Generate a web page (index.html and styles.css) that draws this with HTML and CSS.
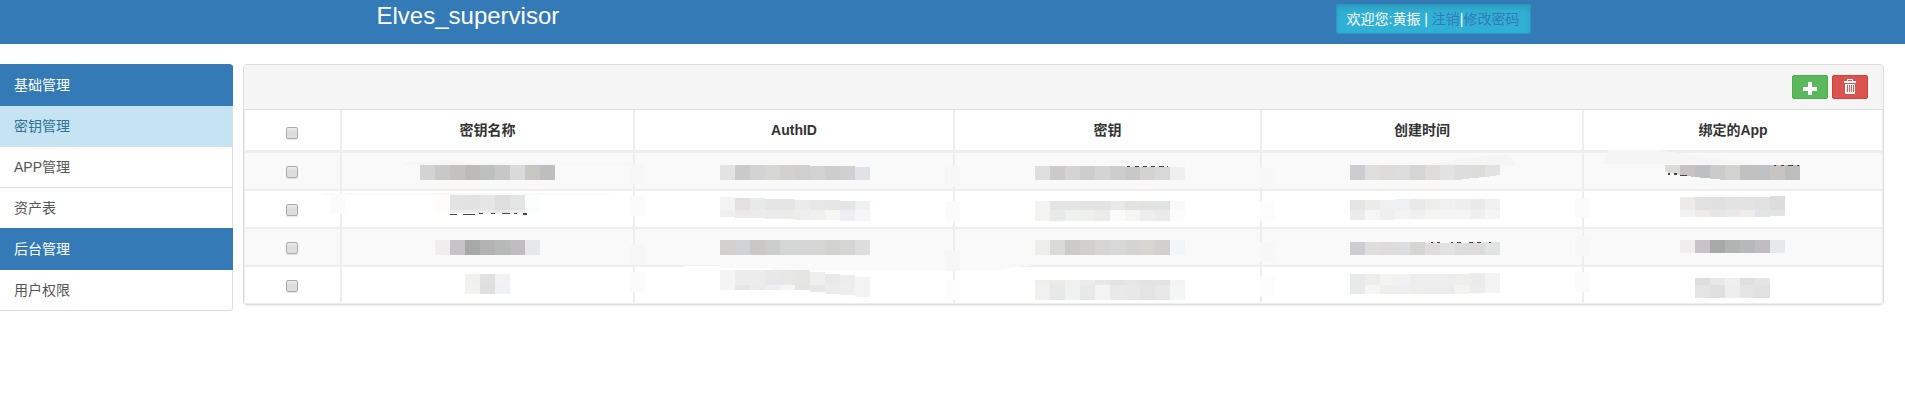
FILE: index.html
```html
<!DOCTYPE html>
<html lang="zh-CN">
<head>
<meta charset="utf-8">
<title>Elves_supervisor</title>
<link rel="stylesheet" href="styles.css">
</head>
<body>
<header class="topbar">
  <div class="topbar-inner">
    <h1 class="brand">Elves_supervisor</h1>
    <div class="welcome">欢迎您:黄振 | <a href="#logout">注销</a>|<a href="#password">修改密码</a></div>
  </div>
</header>
<div class="layout">
  <nav class="menu">
    <div class="menu-title">基础管理</div>
    <a class="menu-item current" href="#keys">密钥管理</a>
    <a class="menu-item" href="#apps">APP管理</a>
    <a class="menu-item" href="#assets">资产表</a>
    <div class="menu-title">后台管理</div>
    <a class="menu-item" href="#users">用户权限</a>
  </nav>
  <main class="panel">
    <div class="panel-heading">
      <button class="btn btn-add" type="button" aria-label="添加"><svg width="14" height="14" viewBox="0 0 14 14"><path fill="#fff" d="M5 0h4v5h5v4H9v4H5V9H0V5h5z"/></svg></button>
      <button class="btn btn-delete" type="button" aria-label="删除"><svg width="14" height="16" viewBox="0 0 14 16"><path fill="#fff" fill-rule="evenodd" d="M4 2V1q0-1 1-1h4q1 0 1 1v1h3v2H1V2zM5 2h4V1H5zM2 5h10v9q0 1-1 1H3q-1 0-1-1zM4 6v7h1V6zM6 6v7h1V6zM8 6v7h1V6zM10 6v7h1V6z"/></svg></button>
    </div>
    <table class="keys">
      <colgroup><col class="c-check"><col class="c-name"><col class="c-auth"><col class="c-key"><col class="c-time"><col class="c-app"></colgroup>
      <thead>
        <tr><th><input type="checkbox" aria-label="全选"></th><th>密钥名称</th><th>AuthID</th><th>密钥</th><th>创建时间</th><th>绑定的App</th></tr>
      </thead>
      <tbody>
        <tr><td><input type="checkbox" aria-label="选择第1行"></td><td class="masked"></td><td class="masked"></td><td class="masked"></td><td class="masked"></td><td class="masked"></td></tr>
        <tr><td><input type="checkbox" aria-label="选择第2行"></td><td class="masked"></td><td class="masked"></td><td class="masked"></td><td class="masked"></td><td class="masked"></td></tr>
        <tr><td><input type="checkbox" aria-label="选择第3行"></td><td class="masked"></td><td class="masked"></td><td class="masked"></td><td class="masked"></td><td class="masked"></td></tr>
        <tr><td><input type="checkbox" aria-label="选择第4行"></td><td class="masked"></td><td class="masked"></td><td class="masked"></td><td class="masked"></td><td class="masked"></td></tr>
      </tbody>
    </table>
  </main>
</div>
<script src="mask.js"></script>
</body>
</html>
```

FILE: styles.css
```css
* { box-sizing: border-box; }

body {
  margin: 0;
  background: #fff;
  color: #333;
  font: 14px/20px "Liberation Sans", "Noto Sans CJK SC", sans-serif;
}

a { color: #337ab7; text-decoration: none; }

.topbar { background: #337ab7; }

.topbar-inner {
  display: flex;
  justify-content: space-between;
  align-items: flex-start;
  max-width: 1156px;
  margin: 0 auto;
  padding: 4px 0 10px;
}

.brand {
  margin: 0;
  padding-left: 2px;
  color: #fff;
  font-size: 24px;
  font-weight: 400;
  line-height: 24px;
}

.welcome {
  padding: 4px 10px;
  border: 1px solid #269abc;
  border-radius: 2px;
  background: #31b0d5;
  box-shadow: inset 0 3px 5px rgba(0, 0, 0, .125);
  color: #fff;
}

.layout {
  display: flex;
  align-items: flex-start;
  gap: 10px;
  padding: 20px 21px 0 0;
}

.menu {
  flex: 0 0 233px;
  border-radius: 0 4px 4px 0;
  overflow: hidden;
  border-bottom: 1px solid #ddd;
}

.menu-title,
.menu-item {
  display: block;
  padding: 10px 14px;
  border-right: 1px solid #ddd;
  color: #555;
}

.menu-title {
  padding: 11px 14px;
  border-color: #337ab7;
  background: #337ab7;
  color: #fff;
}

.menu-item + .menu-item { border-top: 1px solid #ddd; }

.menu-item.current { background: #c4e3f3; color: #31708f; }

.panel {
  flex: 1;
  min-width: 0;
  border: 1px solid #ddd;
  border-radius: 4px;
  box-shadow: 0 1px 1px rgba(0, 0, 0, .05);
}

.panel-heading {
  display: flex;
  justify-content: flex-end;
  gap: 4px;
  padding: 10px 15px;
  border-bottom: 1px solid #ddd;
  border-radius: 3px 3px 0 0;
  background: #f5f5f5;
}

.btn {
  display: flex;
  align-items: center;
  justify-content: center;
  width: 36px;
  height: 24px;
  padding: 0;
  border: 1px solid #4cae4c;
  border-radius: 2px;
  background: #5cb85c;
}

.btn-add { padding-top: 3px; }
.btn-delete { border-color: #d43f3a; background: #d9534f; }

.keys {
  width: 100%;
  table-layout: fixed;
  border-collapse: separate;
  border-spacing: 0;
}

.c-check { width: 5.92%; }
.c-name { width: 17.88%; }
.c-auth { width: 19.52%; }
.c-key { width: 18.73%; }
.c-time { width: 19.65%; }
.c-app { width: 18.3%; }

.keys th,
.keys td {
  padding: 0;
  border: 1px solid #eee;
  text-align: center;
}

.keys th {
  height: 42px;
  border-top: 0;
  border-bottom-width: 2px;
  font-weight: 700;
}

.keys td { height: 38px; }
.keys th:first-child,
.keys td:first-child { padding-right: 2px; }
.keys tbody tr:nth-child(odd) { background: #f9f9f9; }

.keys input {
  display: block;
  appearance: none;
  width: 12px;
  height: 12px;
  margin: 2px auto 0;
  border: 1px solid #aaa;
  border-radius: 2px;
  background: linear-gradient(#ededed, #dcdcdc 40%, #dedede);
  box-shadow: 0 1px 1px rgba(0, 0, 0, .1);
}

.keys th input { margin-top: 5px; }

.masked svg {
  display: block;
  width: 210px;
  height: 36px;
  margin: 0 auto;
  overflow: visible;
}
```

FILE: mask.js
```js
// Mosaic drawings that hide the key data. One drawing per cell, in table order.
// tiles: [x, top, split, bottom, upper colours, lower colours, skew tops]
// extra: [x, y, width, height, colour], shapes: [points, colour]
const DARK = '#444';
const timeTiles = 'cdccd0 dededc dedbda dcdddf d5d5d3 dedddb e2e2e2 dddddd dddcdb e1e3e2';
const nameTiles = 'efedee c9c3c7 a7a9a8 b3b3b3 b7b9b8 c0bdc1 e7e8ea';
const dashes = (x, y, widths) => widths.map((w, i) => [x + i * 8, y, w, 1, DARK]);

const cells = [
  { tiles: [37, 12, 27, 27, 'd3d3d3 c8c8c7 c4c2c0 bdbbba bec0bf c7c7c7 dadada c8c6c1 bebdbf'],
    shapes: [['20,11 28,9 72,8 80,10 248,11 248,12 20,12', '#f6f6f6']],
    extra: [[247, 11, 15, 20, '#f7f7f7']] },
  { tiles: [31, 12, 27, 27, 'e3e3e3 cacaca d3d3d3 d7d7d5 d3d0ce cfcfcf d2d2d2 cdcdcd d0d0d0 e1e2e7', '', [0, 0, 0, 0, 0, 0, 1, 1, 1, 2]],
    extra: [[256, 13, 15, 20, '#f7f7f7']] },
  { tiles: [33, 13, 27, 27, 'dededc cacacb d6d4d2 cdcdcd d4d4d4 cdcdcf c8c8c8 d4d3cf d8d8d8 efefef', '', [0, 0, 0, 0, 0, 0, 1, 1, 1, 1]],
    extra: [...dashes(125, 13, [3, 4, 4, 4, 5, 1]), [258, 14, 15, 20, '#f7f7f7']] },
  { tiles: [33, 12, 27, 27, timeTiles],
    shapes: [['105,12 173,2 192,2 199,12', '#f5f5f5'], ['141,27 156,25 168,24 183,22 183,28 141,28', '#f9f9f9']] },
  { tiles: [37, 12, 27, 27, 'dcdbd7 c8c2c4 bcc0c1 cbcbcc d2d3cf c0c0c0 bdc1c3 c7c4c2 bdbcbf'],
    shapes: [['-24,11 -22,0 -18,-3 30,-3 124,11', '#f5f5f5'], ['37,19 52,22 67,24 97,27 97,28 37,28', '#f9f9f9']],
    extra: [[40, 20, 2, 2, DARK], [46, 20, 3, 2, DARK], [52, 22, 7, 1, DARK], [146, 12, 2, 1, DARK], [153, 12, 3, 1, DARK], [160, 12, 5, 1, DARK], [169, 12, 2, 1, DARK]] },

  { tiles: [67, 4, 19, 22, 'e3e3e3 e2e2e2 e6e6e6 dedede e4e4e4', 'ededed ededed ededed e9e9e9 ededed'],
    shapes: [['-62,3 -52,2 210,2 228,3 228,4 -62,4', '#f9f9f9']],
    extra: [[-53, 2, 15, 20, '#fbfbfb'], [52, 4, 15, 18, '#fffdfb'], [142, 4, 15, 18, '#fafdfc'], [67, 23, 7, 1, DARK], [80, 23, 12, 1, DARK], [96, 22, 4, 1, DARK], [108, 22, 4, 1, DARK], [119, 22, 8, 1, DARK], [131, 22, 3, 1, DARK], [140, 22, 4, 2, DARK], [247, 5, 15, 20, '#fbfbfb']] },
  { tiles: [31, 6, 19, 26, 'f3f3f3 e5e0e0 e8e9eb e6e5e6 e4e6e5 ecebe9 e6e7e7 e8e6e4 e3e5e7 eff1f0', 'efefef eaeaea ebebeb ebebeb ebebeb efeeec eff1f0 f8f6f4 eceef1 f6f6f6', [0, 1, 1, 2, 2, 3, 3, 3, 4, 4]],
    extra: [[256, 10, 15, 20, '#fbfbfb']] },
  { tiles: [33, 10, 19, 30, 'f4f3f2 e4e4e7 e4e4e5 e3e3e4 e3e3e2 e9e9e9 e3e3e0 e2e2e0 e0e3e1 f9f9f9', 'f4f3f2 e9e9e9 eff0f0 efefed ebebeb fbfbfb f5f6f4 ededed eaeaea fbfdfd'],
    extra: [[258, 10, 15, 20, '#fcfcfc']] },
  { tiles: [33, 9, 19, 29, 'e4e4e4 ebebea f0f0f0 eef0f2 e9e9e9 ededeb f0f0f0 eeeeee e9e9e9 f0f0f0', 'ebebeb f6f6f6 efefef f2f4f3 f0f0ee f5f5f5 f5f5f5 f5f5f5 f0efed f5f5f5', [0, 0, 0, -1, -1, -1, -1, -1, -1, -1]],
    extra: [[258, 7, 15, 20, '#fbfbfb']] },
  { tiles: [52, 6, 19, 26, 'edebe9 e1e1e1 e0e0e0 e2e4e3 e3e3e1 e1e1e3 dcdcdd', 'f2f2f2 eeecea e6e6e7 e9e9e9 efece9 e2e4e6 e2e5e4', [0, 0, 0, 0, 0, 0, -1]] },

  { tiles: [52, 11, 26, 26, nameTiles],
    extra: [[247, 16, 15, 20, '#f6f6f6']] },
  { tiles: [31, 11, 26, 26, 'd3d0ce d1d2d5 cac8c6 cdcdcd d3d6d5 d5d5d5 d5d5d5 d2d2cf d5d5d5 dddddd'],
    shapes: [['-5,36 30,36 30,39 84,39 84,41 310,41 320,39 345,36', '#f9f9f9'], ['-5,37 30,37 30,38 -5,38', '#fff']],
    extra: [[256, 22, 15, 20, '#f6f6f6']] },
  { tiles: [33, 11, 26, 26, 'ededeb dadad7 cbcbcc d2d0ce d5d5d5 d8d8d8 d4d4d2 d6d5cf d2cfcd f2f6f9'],
    extra: [[258, 13, 15, 20, '#f7f7f7']] },
  { tiles: [33, 13, 26, 26, timeTiles, '', [0, 0, 0, 0, 0, 1, 1, 1, 1, 0]],
    extra: [[114, 13, 2, 1, DARK], [120, 13, 3, 1, DARK], [134, 13, 2, 1, DARK], [140, 13, 4, 1, DARK], [152, 13, 4, 1, DARK], [160, 13, 4, 1, DARK], [172, 13, 2, 1, DARK], [258, 7, 15, 20, '#f7f7f7']] },
  { tiles: [52, 11, 24, 24, nameTiles] },

  { tiles: [82, 7, 18, 27, 'f1f1ef e2e0e3 f2f2f3', 'f4f2f0 dfdfdf eff1f4'],
    extra: [[247, 5, 15, 20, '#fbfbfb']] },
  { tiles: [31, 3, 18, 23, 'f4f4f4 ececec ececec e8e8e8 e7e7e7 e5e5e3 efefef e9e9e9 ededed f3f3f3', 'f4f4f4 e6e6e6 ebebeb eeeff2 f5f5f5 e4e4e4 e7e9e8 ececec eeeeec f3f3f3', [0, 0, 0, 0, 0, 0, 2, 4, 5, 7]],
    extra: [[256, 13, 15, 20, '#fcfcfc']] },
  { tiles: [33, 13, 18, 33, 'eeeeec ebebea f1f0ed ececec e7e7e5 e3e3e3 e6e6e6 e3e3e3 e2e2e2 f3f3f3', 'f0f0ee e8e8e8 eff1f0 e8e8e8 f3f3f3 e9e9e9 e8e8e8 e4e4e4 e8e8e8 f4f6f5'],
    extra: [[258, 9, 15, 20, '#fcfcfc']] },
  { tiles: [33, 7, 18, 27, 'e8e9ea ededeb f3f3f0 f2f2f2 ededed ededed ededed eeeeec ebebeb f3f3f3', 'e8e9ea f5f5f3 efeeec eeeff1 ededeb ececec ececec f3f3f2 ececec f3f3f3', [0, 0, 0, 0, 0, 0, 0, 0, -1, -1]],
    extra: [[258, 5, 15, 20, '#fbfbfb']] },
  { tiles: [67, 11, 18, 31, 'dfdddf e8e8e8 efefef e0dfdf e5e5e5', 'e4e4e4 e0e0e0 ecefed e4e4e4 e1e1e1'] }
];

function rect(x, y, w, h, fill) {
  return `<rect x="${x}" y="${y}" width="${w}" height="${h}" fill="${fill}"/>`;
}

function draw({ tiles, shapes = [], extra = [] }) {
  const [x, top, split, bottom, upper, lower = '', skew = []] = tiles;
  const low = lower ? lower.split(' ') : [];
  let out = '';
  upper.split(' ').forEach((colour, i) => {
    const shift = skew[i] || 0;
    out += rect(x + i * 15, top + shift, 15, split - top - shift, '#' + colour);
    if (low[i]) out += rect(x + i * 15, split, 15, bottom + shift - split, '#' + low[i]);
  });
  const over = shapes.map(([points, fill]) => `<polygon points="${points}" fill="${fill}"/>`).join('');
  return `<svg viewBox="0 0 210 36" shape-rendering="crispEdges" aria-hidden="true">${out}${over}${extra.map(e => rect(...e)).join('')}</svg>`;
}

document.querySelectorAll('.masked').forEach((cell, i) => {
  cell.innerHTML = draw(cells[i]);
});
```
